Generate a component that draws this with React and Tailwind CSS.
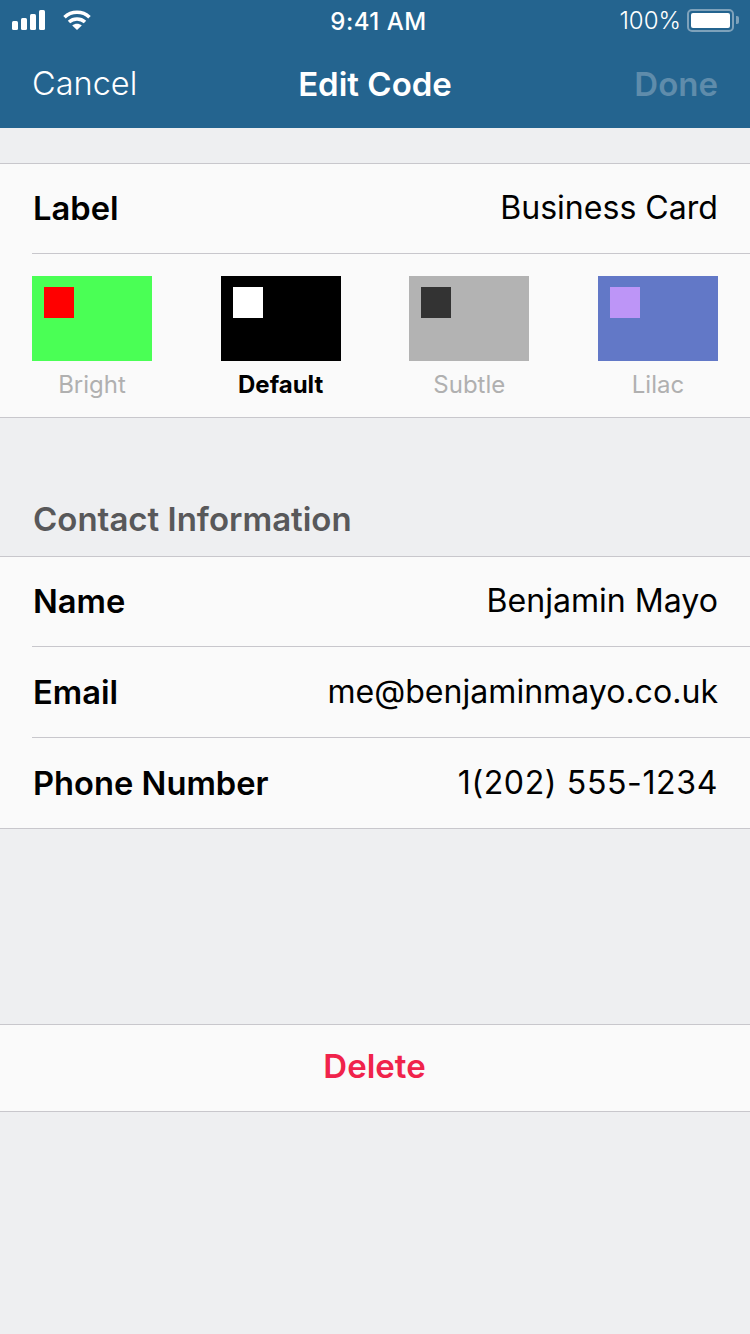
import React from "react";

const FONT = "font-['Inter','Liberation_Sans',sans-serif]";

function StatusBar() {
  return (
    <div className="h-10 flex items-center justify-between pl-3 pr-[11px] text-white">
      <div className="flex items-center gap-[17px] w-[200px]">
        <svg width="34" height="20" viewBox="0 0 34 20" fill="#fff">
          <rect x="0" y="11" width="6" height="9" rx="1.5" />
          <rect x="9" y="8" width="6" height="12" rx="1.5" />
          <rect x="18" y="4" width="6" height="16" rx="1.5" />
          <rect x="27" y="0" width="6" height="20" rx="1.5" />
        </svg>
        <svg width="28" height="20" viewBox="0 0 28 20" fill="none" stroke="#fff" strokeWidth="3.6">
          <path d="M1.5 7.2 C8.5 0.6 19.5 0.6 26.5 7.2" />
          <path d="M6 12 C10.5 8 17.5 8 22 12" />
          <path d="M14 20 L9.2 15.4 C12 13.2 16 13.2 18.8 15.4 Z" fill="#fff" stroke="none" />
        </svg>
      </div>
      <span className="text-[24px] leading-none font-medium mt-[3px] ml-[6px] tracking-[0.5px]">9:41 AM</span>
      <div className="flex items-center justify-end gap-[6px] w-[200px]">
        <span className="text-[24px] leading-none font-light mt-[2px]">100%</span>
        <div className="flex items-center">
          <div className="w-[47px] h-[23px] rounded-[5px] border-2 border-[#7ea2bb] p-[2px]">
            <div className="w-full h-full bg-white rounded-[2px]" />
          </div>
          <div className="w-[3px] h-[8px] ml-[2px] bg-[#7ea2bb] rounded-r-[2px]" />
        </div>
      </div>
    </div>
  );
}

function NavBar() {
  return (
    <div className="h-[88px] flex items-center justify-between px-[32px] leading-none">
      <span className="text-white text-[32.5px] font-light w-[150px] mt-[1px]">Cancel</span>
      <span className="text-white font-semibold text-[33px] mt-[1px]">Edit Code</span>
      <span className="text-[#5f8cab] text-[33px] font-semibold w-[150px] text-right mt-[1px]">Done</span>
    </div>
  );
}

function Row({ label, value, height = "h-[90px]", valueClass = "", labelClass = "", last }) {
  return (
    <div className="pl-[32px]">
      <div className={`flex items-center justify-between pr-[32px] ${height} ${last ? "" : "border-b border-[#c8c7cc]"}`}>
        <span className={`text-[32.7px] leading-none font-semibold text-black pl-[1px] ${labelClass}`}>{label}</span>
        <span className={`text-[32.1px] leading-none text-black ${valueClass}`}>{value}</span>
      </div>
    </div>
  );
}

function Swatch({ bg, fg, label, active }) {
  return (
    <div className="w-[120px] flex flex-col items-center">
      <div className={`w-[120px] h-[85px] pl-3 pt-[11px] ${bg}`}>
        <div className={`w-[30px] h-[31px] ${fg}`} />
      </div>
      <span className={`mt-[10px] text-[24px] leading-[28px] ${active ? "font-bold text-black" : "text-[#b0b0b0]"}`}>{label}</span>
    </div>
  );
}

export default function App() {
  return (
    <div className={`${FONT} w-[750px] h-[1334px] bg-[#eeeff1] overflow-hidden`}>
      <div className="bg-[#24648f]">
        <StatusBar />
        <NavBar />
      </div>

      <div className="mt-[35px] bg-[#fafafa] border-y border-[#c8c7cc]">
        <Row label="Label" value="Business Card" valueClass="-mt-[1px]" />
        <div className="h-[163px] flex justify-between px-[32px] pt-[22px]">
          <Swatch bg="bg-[#4aff55]" fg="bg-[#ff0000]" label="Bright" />
          <Swatch bg="bg-black" fg="bg-white" label="Default" active />
          <Swatch bg="bg-[#b3b3b3]" fg="bg-[#333333]" label="Subtle" />
          <Swatch bg="bg-[#6278c7]" fg="bg-[#bd95f7]" label="Lilac" />
        </div>
      </div>

      <div className="h-[138px] flex items-end pl-[33px] pb-[20px]">
        <span className="text-[33px] leading-none font-semibold text-[#58585a]">Contact Information</span>
      </div>

      <div className="bg-[#fafafa] border-y border-[#c8c7cc]">
        <Row label="Name" value="Benjamin Mayo" valueClass="-mt-[1px]" />
        <Row label="Email" value="me@benjaminmayo.co.uk" height="h-[91px]" labelClass="mt-[1px]" />
        <Row label="Phone Number" value="1(202) 555-1234" valueClass="tracking-[0.6px]" labelClass="mt-[1px]" last />
      </div>

      <div className="mt-[195px] h-[88px] bg-[#fafafa] border-y border-[#c8c7cc] flex items-center justify-center">
        <span className="text-[33px] leading-none font-semibold text-[#f0234b] mb-[3px] mr-[1px]">Delete</span>
      </div>
    </div>
  );
}
